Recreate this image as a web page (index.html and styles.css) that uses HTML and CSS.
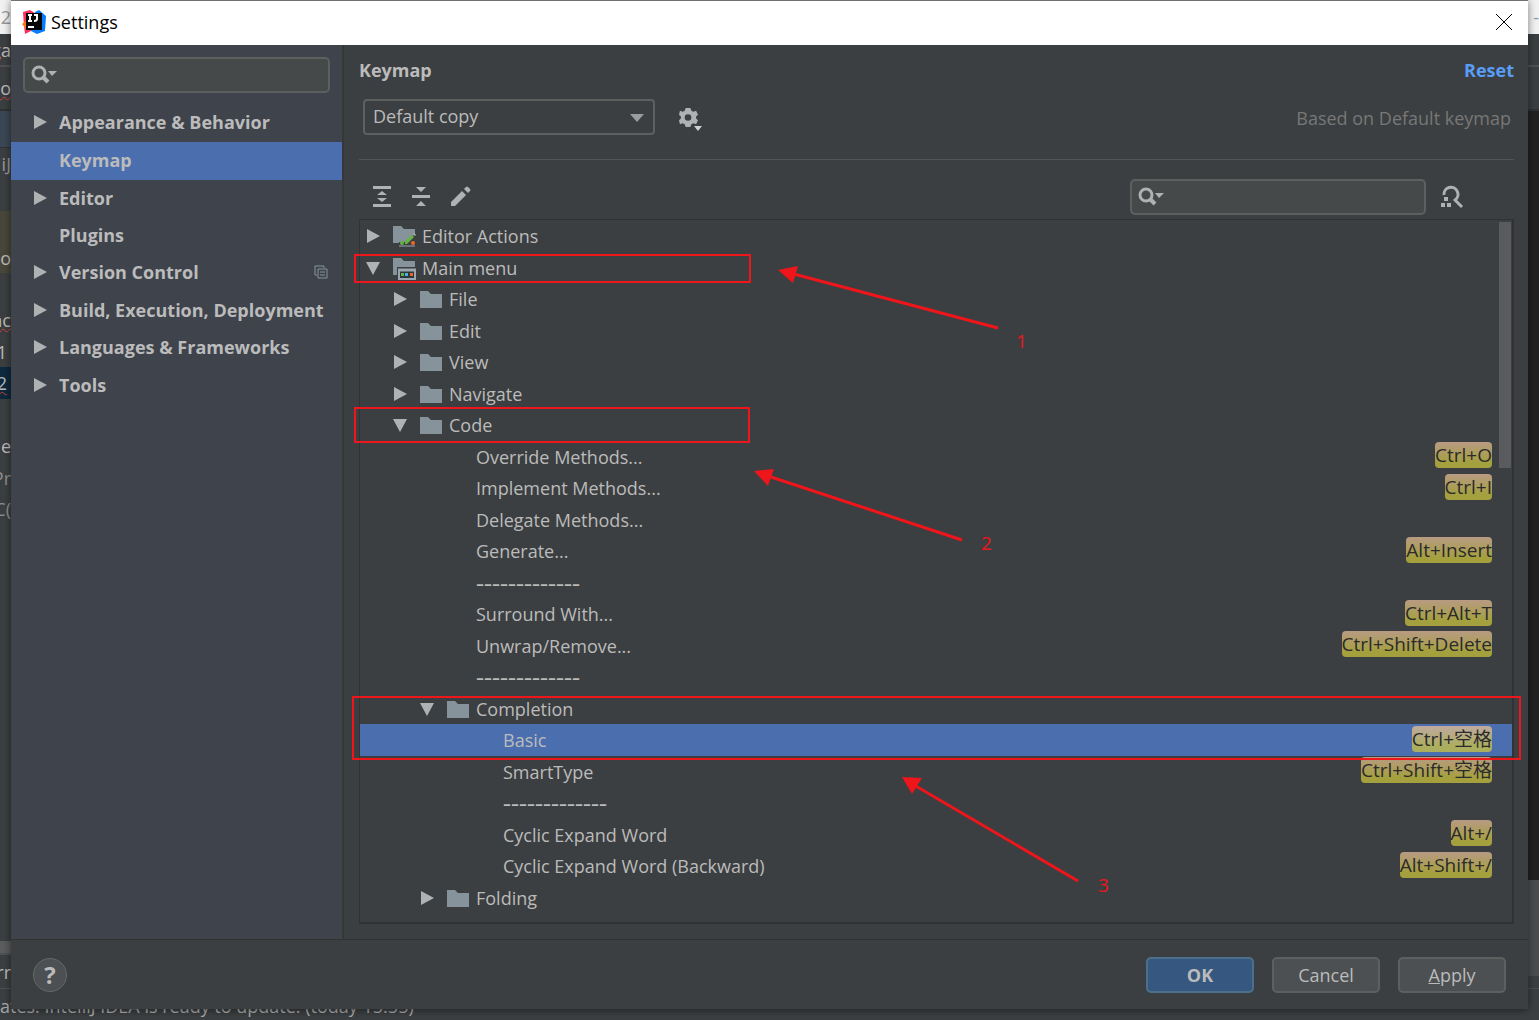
FILE: index.html
```
<!DOCTYPE html>
<html lang="en">
<head>
<meta charset="utf-8">
<title>Settings</title>
<link rel="stylesheet" href="styles.css">
</head>
<body>
<svg class="defs" aria-hidden="true">
  <symbol id="right" viewBox="0 0 14 14"><path d="M1 0 14 7 1 14Z" fill="#afb1b3"/></symbol>
  <symbol id="down" viewBox="0 0 14 14"><path d="M0 1H14L7 14Z" fill="#afb1b3"/></symbol>
  <symbol id="folder" viewBox="0 0 22 22"><path d="M0 3H8L11 6H22V20H0Z" fill="#87939a"/></symbol>
  <symbol id="search" viewBox="0 0 28 20"><circle cx="9" cy="8" r="6" fill="none" stroke="#afb1b3" stroke-width="3"/><path d="M13 12 18 17" stroke="#afb1b3" stroke-width="4"/><path d="M18 6H27L22 11Z" fill="#afb1b3"/></symbol>
</svg>

<div class="ide" aria-hidden="true">
  <div class="strip strip-left">
    <div class="line title-line">2</div>
    <div class="line menu-line"><span><i>g</i>a</span></div>
    <div class="line nav-line"><span class="typo">co</span></div>
    <div class="line tab-line"></div>
    <div class="line crumb-line">iJ</div>
    <div class="line gap-line"></div>
    <div class="line note-line">o</div>
    <div class="line gap-line"></div>
    <div class="line"><span class="typo">nc</span></div>
    <div class="line pad">1</div>
    <div class="line pad current"><span class="typo">2</span></div>
    <div class="line"></div>
    <div class="line"><span><i>i</i>e</span></div>
    <div class="line dim">Pr</div>
    <div class="line dim">C(</div>
    <div class="line rest"></div>
    <div class="line bar-line"></div>
    <div class="line error-line"><span><i>e</i>rr</span></div>
    <div class="line status-line"></div>
  </div>
  <div class="strip strip-right">
    <div class="line title-line">-</div>
    <div class="line menu-line"></div>
    <div class="line nav-line"></div>
    <div class="line rest editor"></div>
    <div class="line popup-line"></div>
    <div class="line low-line"></div>
    <div class="line status-line"></div>
  </div>
  <p class="status">ates: IntelliJ IDEA is ready to update. (today 15:55)</p>
</div>

<div class="dialog" role="dialog" aria-label="Settings">
  <header class="titlebar">
    <svg class="logo" viewBox="0 0 24 24"><path d="M1 2 8 0 13 3 11 20 3 24 2 16Z" fill="#fe315d"/><path d="M0 14 5 10 9 18 4 19Z" fill="#f97a12"/><path d="M13 2 17 0 24 6 23 21 15 24 9 21Z" fill="#087cfa"/><path d="M4 3H20V20H4Z" fill="#070707"/><path d="M6 5H10M8 5V11M6 11H10M12 5H16M15 5V9Q15 11 12 11M6 17H12" fill="none" stroke="#fff" stroke-width="2"/></svg>
    <h1>Settings</h1>
    <button class="close" aria-label="Close"><svg viewBox="0 0 16 16"><path d="M0 0 16 16M16 0 0 16" stroke="#000"/></svg></button>
  </header>

  <div class="body">
    <aside class="sidebar">
      <label class="search"><svg><use href="#search"/></svg><input type="text" aria-label="Search settings"></label>
      <ul class="nav">
        <li><svg><use href="#right"/></svg><span>Appearance &amp; Behavior</span></li>
        <li class="selected"><svg></svg><span>Keymap</span></li>
        <li><svg><use href="#right"/></svg><span>Editor</span></li>
        <li><svg></svg><span>Plugins</span></li>
        <li><svg><use href="#right"/></svg><span>Version Control</span><svg class="copy" viewBox="0 0 14 14"><path d="M3 10H1V1H10V3M4 4H13V13H4ZM6 7H11M6 10H11" fill="none" stroke="#87939a"/></svg></li>
        <li><svg><use href="#right"/></svg><span>Build, Execution, Deployment</span></li>
        <li><svg><use href="#right"/></svg><span>Languages &amp; Frameworks</span></li>
        <li><svg><use href="#right"/></svg><span>Tools</span></li>
      </ul>
    </aside>

    <main class="content">
      <div class="heading"><h2>Keymap</h2><a href="#reset">Reset</a></div>
      <div class="scheme">
        <div class="combo">
          <select aria-label="Keymap scheme"><option>Default copy</option></select>
          <svg viewBox="0 0 14 8"><path d="M0 0H14L7 8Z" fill="#9a9da0"/></svg>
        </div>
        <button class="icon gear" aria-label="Scheme actions"><svg viewBox="0 0 24 28"><path transform="translate(0 5) scale(.95)" fill-rule="evenodd" d="M7 0H12L13 3 15 4 18 3 20 7 18 9V11L20 13 18 17 15 16 13 17 12 20H7L6 17 4 16 1 17 0 13 2 11V9L0 7 1 3 4 4 6 3ZM9.500 6.500A3.500 3.500 0 1 0 9.500 13.500 3.500 3.500 0 1 0 9.500 6.500Z" fill="#afb1b3"/><path d="M15 23H23L19 28Z" fill="#d0d2d4"/></svg></button>
        <span class="based">Based on Default keymap</span>
      </div>
      <div class="toolbar">
        <button class="icon" aria-label="Expand all"><svg viewBox="0 0 22 22"><path d="M2 0H20V3H2ZM2 18H20V21H2ZM11 5 16 9H6ZM6 12H16L11 16Z" fill="#afb1b3"/></svg></button>
        <button class="icon" aria-label="Collapse all"><svg viewBox="0 0 22 22"><path d="M2 9H20V12H2ZM6 1H16L11 6ZM11 15 16 20H6Z" fill="#afb1b3"/></svg></button>
        <button class="icon" aria-label="Edit shortcut"><svg viewBox="0 0 22 22"><path d="M2 16 13 5 17 9 6 20H2ZM15 3 17 1Q18 0 19 1L21 3Q22 4 21 5L19 7Z" fill="#afb1b3"/></svg></button>
        <label class="search filter"><svg><use href="#search"/></svg><input type="text" aria-label="Search actions"></label>
        <button class="icon find" aria-label="Find by shortcut"><svg viewBox="0 0 24 24"><path d="M4 10A7 7 0 1 1 15 15M14 14 22 22" fill="none" stroke="#afb1b3" stroke-width="3"/><path d="M4 12H8V16H4ZM1 18H5V22H1ZM7 18H11V22H7Z" fill="#afb1b3"/></svg></button>
      </div>

      <div class="panel">
        <ul class="tree">
          <li><svg class="arrow"><use href="#right"/></svg><svg class="kind" viewBox="0 0 22 22"><path d="M0 1H8L11 4H22V9L12 17H6V18H0Z" fill="#87939a"/><path d="M12 19V16L19 10 21 12 14 19Z" fill="#62b543"/><path d="M20 9 21 8 23 10 22 11Z" fill="#afb1b3"/><circle cx="9" cy="18" r="2" fill="#62b543"/><circle cx="20" cy="18" r="2" fill="#f26522"/><path d="M6 21H22" stroke="#9aa7b0" stroke-width="1"/></svg><span>Editor Actions</span></li>
          <li><svg class="arrow"><use href="#down"/></svg><svg class="kind" viewBox="0 0 22 22"><path d="M0 1H8L11 4H22V10H4V18H0Z" fill="#87939a"/><path d="M6 13V22H22V13Z" fill="#30363a" stroke="#9aa7b0" stroke-width="2"/><path d="M5 13H23" stroke="#9aa7b0" stroke-width="3"/><path d="M8 16H11V19H8Z" fill="#62b543"/><path d="M12 16H15V19H12Z" fill="#40b6e0"/><path d="M17 16H20V19H17Z" fill="#f26522"/></svg><span>Main menu</span></li>
          <li class="l1"><svg class="arrow"><use href="#right"/></svg><svg class="kind"><use href="#folder"/></svg><span>File</span></li>
          <li class="l1"><svg class="arrow"><use href="#right"/></svg><svg class="kind"><use href="#folder"/></svg><span>Edit</span></li>
          <li class="l1"><svg class="arrow"><use href="#right"/></svg><svg class="kind"><use href="#folder"/></svg><span>View</span></li>
          <li class="l1"><svg class="arrow"><use href="#right"/></svg><svg class="kind"><use href="#folder"/></svg><span>Navigate</span></li>
          <li class="l1"><svg class="arrow"><use href="#down"/></svg><svg class="kind"><use href="#folder"/></svg><span>Code</span></li>
          <li class="leaf"><span>Override Methods...</span><kbd>Ctrl+O</kbd></li>
          <li class="leaf"><span>Implement Methods...</span><kbd>Ctrl+I</kbd></li>
          <li class="leaf"><span>Delegate Methods...</span></li>
          <li class="leaf"><span>Generate...</span><kbd>Alt+Insert</kbd></li>
          <li class="leaf"><span class="rule">-------------</span></li>
          <li class="leaf"><span>Surround With...</span><kbd>Ctrl+Alt+T</kbd></li>
          <li class="leaf"><span>Unwrap/Remove...</span><kbd>Ctrl+Shift+Delete</kbd></li>
          <li class="leaf"><span class="rule">-------------</span></li>
          <li class="l2"><svg class="arrow"><use href="#down"/></svg><svg class="kind"><use href="#folder"/></svg><span>Completion</span></li>
          <li class="leaf deep selected"><span>Basic</span><kbd>Ctrl+空格</kbd></li>
          <li class="leaf deep"><span>SmartType</span><kbd>Ctrl+Shift+空格</kbd></li>
          <li class="leaf deep"><span class="rule">-------------</span></li>
          <li class="leaf deep"><span>Cyclic Expand Word</span><kbd>Alt+/</kbd></li>
          <li class="leaf deep"><span>Cyclic Expand Word (Backward)</span><kbd>Alt+Shift+/</kbd></li>
          <li class="l2"><svg class="arrow"><use href="#right"/></svg><svg class="kind"><use href="#folder"/></svg><span>Folding</span></li>
        </ul>
        <div class="thumb"></div>
      </div>
    </main>
  </div>

  <footer class="actions">
    <button class="help" aria-label="Help">?</button>
    <button class="btn primary">OK</button>
    <button class="btn">Cancel</button>
    <button class="btn"><u>A</u>pply</button>
  </footer>
</div>

<div class="mark mark-menu"></div>
<div class="mark mark-code"></div>
<div class="mark mark-basic"></div>
<svg class="notes" width="1200" height="920">
  <g stroke="#ee151b" stroke-width="3"><path d="M790 273 998 328M768 476 962 540M914 785 1078 881"/></g>
  <path d="M778 270 798 266 793 283ZM754 471 774 469 768 486ZM902 777 922 778 912 794Z" fill="#ee151b"/>
  <g class="digits"><text x="1016" y="348">1</text><text x="981" y="550">2</text><text x="1098" y="892">3</text></g>
</svg>
</body>
</html>
```
FILE: styles.css
```
* { box-sizing: border-box; }
body {
  margin: 0;
  position: relative;
  min-height: 100vh;
  overflow: hidden;
  background: #3c3f41;
  color: #bbbbbb;
  font: 18px/24px "Open Sans", "Noto Sans CJK SC", sans-serif;
}
button, input, select { font: inherit; color: inherit; }
ul, h1, h2, p { margin: 0; padding: 0; list-style: none; }
button { padding: 0; border: 0; background: none; }
svg { display: block; flex: none; }
.defs { position: absolute; width: 0; height: 0; }

/* IDE window behind the dialog */
.ide { position: absolute; inset: 0; display: flex; justify-content: space-between; overflow: hidden; }
.strip { display: flex; flex-direction: column; width: 11px; }
.line { display: flex; align-items: center; justify-content: flex-end; flex: none; height: 32px; overflow: hidden; white-space: nowrap; }
.line:nth-child(even) { height: 31px; }
.line i { color: #cc7832; font-style: normal; }
.line.title-line { height: 34px; background: #f2f2f2; color: #999999; }
.line.menu-line { height: 33px; border-bottom: 2px solid #515151; }
.line.nav-line { height: 44px; border-bottom: 2px solid #323232; }
.line.tab-line { height: 37px; background: #3b4754; border-bottom: 1px solid #323232; }
.line.crumb-line { height: 32px; color: #999999; }
.line.gap-line { height: 31px; }
.line.note-line { height: 62px; padding-top: 32px; background: #49473a; }
.line.pad { padding-right: 4px; }
.line.current { background: #0d293e; }
.line.dim { color: #909090; }
.line.rest { flex: 1; height: auto; }
.line.bar-line { height: 14px; border-bottom: 2px solid #515151; background: #5a5c5d; }
.line.error-line { height: 34px; border-bottom: 1px solid #515151; }
.line.status-line { height: 31px; }
.line.editor { background: #222222; }
.line.popup-line { height: 96px; background: #4b4d4f; }
.line.low-line { height: 13px; border-bottom: 1px solid #4a4d4f; }
.typo { text-decoration: underline wavy #d0413e 1px; }
.status { position: absolute; left: 0; bottom: 2px; color: #a9a9a9; }

/* Dialog frame */
.dialog {
  position: relative;
  display: flex;
  flex-direction: column;
  min-height: calc(100vh - 11px);
  margin: 0 11px 11px;
  background: #3c3f41;
  box-shadow: 0 1px 8px rgba(0, 0, 0, 0.5);
}
.titlebar { display: flex; align-items: center; height: 45px; padding: 0 16px 2px 11px; border-top: 1px solid #707070; background: #ffffff; color: #000000; }
.logo { width: 24px; height: 24px; margin-right: 5px; }
.titlebar h1 { font-size: 18px; font-weight: 400; }
.close { margin-left: auto; }
.close svg { width: 16px; height: 16px; }
.body { display: flex; flex: 1; }

/* Categories */
.sidebar { flex: none; width: 333px; padding-top: 12px; border-right: 2px solid #353739; background: #3e434c; }
.search { display: flex; align-items: center; height: 36px; padding: 0 8px; border: 2px solid #5e6060; border-radius: 5px; background: #45494a; }
.search svg { width: 28px; height: 20px; }
.search input { flex: 1; min-width: 0; border: 0; outline: 0; background: none; }
.sidebar .search { margin: 0 12px 11px; padding: 0 5px; }
.nav li { display: flex; align-items: center; height: 37px; padding: 0 14px 2px 22px; font-weight: 700; }
.nav li:nth-child(odd) { height: 38px; }
.nav li.selected { height: 38px; background: #4b6eaf; }
.nav li.selected + li { height: 37px; }
.nav svg { width: 14px; height: 14px; margin-right: 12px; }
.nav svg.copy { margin: 0 0 0 auto; }

/* Keymap page */
.content { flex: 1; min-width: 0; padding: 13px 14px 14px 15px; }
.heading { display: flex; justify-content: space-between; font-weight: 700; }
.heading h2 { font-size: 18px; }
.heading a { color: #589df6; text-decoration: none; }
.scheme { display: flex; align-items: center; padding: 17px 3px 24px 4px; border-bottom: 1px solid #515355; }
.combo { position: relative; width: 292px; }
.combo select { display: block; width: 100%; height: 36px; padding: 0 8px 2px; border: 2px solid #5e6060; border-radius: 4px; background: #3c3f41; appearance: none; }
.combo svg { position: absolute; top: 15px; right: 11px; width: 14px; height: 8px; pointer-events: none; }
.gear { margin-left: 24px; }
.icon svg { width: 24px; height: 28px; }
.based { margin-left: auto; padding-top: 2px; color: #777777; }
.toolbar { display: flex; align-items: center; gap: 17px; padding: 19px 50px 4px 12px; }
.toolbar .icon svg { width: 22px; height: 22px; }
.toolbar .find svg { width: 24px; height: 24px; }
.filter { width: 296px; margin-left: auto; padding: 0 5px; }
.find { margin-left: -3px; }

.panel { position: relative; padding-bottom: 9px; border: 1px solid #323232; border-width: 1px 2px 2px 1px; }
.tree li { display: flex; align-items: center; height: 31px; padding: 0 20px 0 6px; white-space: nowrap; }
.tree li:nth-child(odd) { height: 32px; }
.tree .l1 { padding-left: 33px; }
.tree .l2 { padding-left: 60px; }
.tree .leaf { padding-left: 116px; }
.tree .deep { padding-left: 143px; }
.tree .selected { background: #4b6eaf; }
.tree .arrow { width: 14px; height: 14px; margin-right: 13px; }
.tree .kind { width: 22px; height: 22px; margin-right: 7px; overflow: visible; }
.tree kbd { margin: 0 0 3px auto; border-radius: 4px; background: linear-gradient(#b89b83, #a5a03e 80%); color: #2b2b2b; font: inherit; font-size: 19px; line-height: 26px; }
.tree .selected kbd { background: linear-gradient(#c0aaa0, #abae5c 80%); }
.rule { font-family: "Liberation Serif", serif; font-size: 24px; }
.thumb { position: absolute; top: 2px; right: 1px; width: 12px; height: 246px; background: #5a5b5d; }

/* Footer */
.actions { display: flex; align-items: center; gap: 18px; height: 70px; padding: 0 22px; border-top: 1px solid #323232; }
.help { width: 34px; height: 34px; margin-right: auto; border: 1px solid #646868; border-radius: 50%; background: #4c5052; font-size: 24px; font-weight: 700; }
.btn { width: 108px; height: 36px; border: 2px solid #5e6060; border-radius: 5px; background: #4c5052; }
.primary { border-color: #4c708c; background: #365880; font-weight: 700; }

/* Annotations drawn over the window */
.mark { position: absolute; border: 2px solid #ee151b; pointer-events: none; }
.mark-menu { top: 254px; left: 354px; width: 397px; height: 29px; }
.mark-code { top: 407px; left: 354px; width: 396px; height: 36px; }
.mark-basic { top: 696px; left: 352px; right: 18px; height: 64px; }
.notes { position: absolute; top: 0; left: 0; pointer-events: none; }
.digits { fill: #ee151b; font-size: 19px; }
```
